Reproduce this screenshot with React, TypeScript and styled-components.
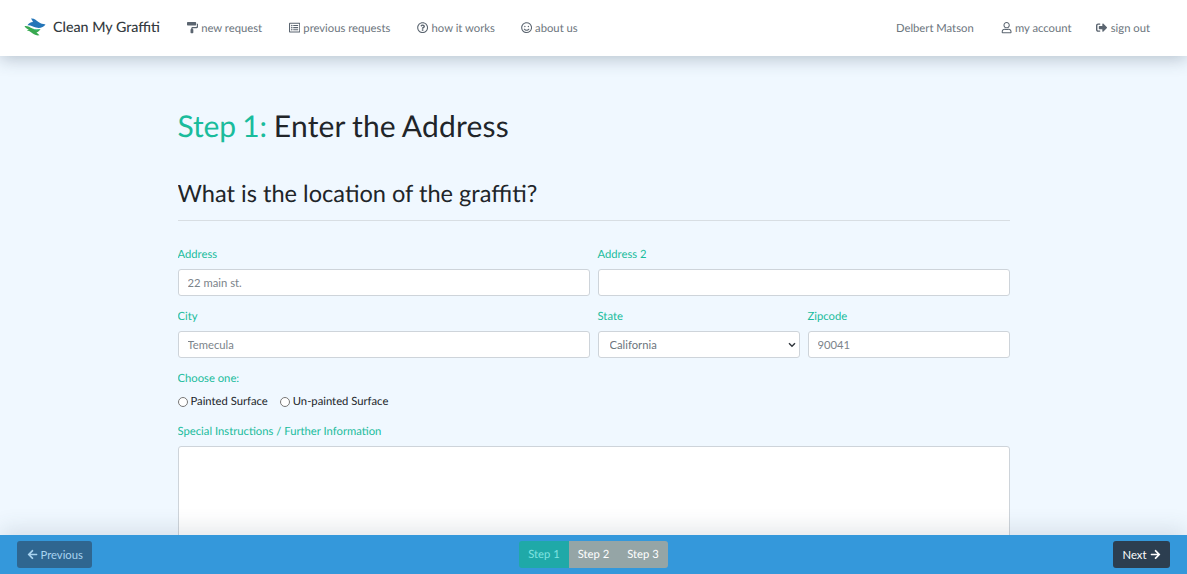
import React from "react";
import styled, { createGlobalStyle } from "styled-components";
import {
  FaArrowLeft,
  FaArrowRight,
  FaPaintRoller,
  FaRegListAlt,
  FaRegQuestionCircle,
  FaRegSmile,
  FaRegUser,
  FaSignOutAlt,
} from "react-icons/fa";

const GlobalStyle = createGlobalStyle`
  * { box-sizing: border-box; }
  html, body, #root { height: 100%; margin: 0; }
  body {
    font-family: Lato, "Liberation Sans", sans-serif;
    background: #f0f8ff;
    color: #212529;
    overflow: hidden;
    text-rendering: geometricPrecision;
  }
`;

const Page = styled.div`
  height: 100%;
  display: flex;
  flex-direction: column;
`;

const Nav = styled.nav`
  flex: 0 0 56px;
  display: flex;
  align-items: center;
  justify-content: space-between;
  padding: 0 37px 0 24px;
  background: #fff;
  box-shadow: 0 3px 16px rgba(50, 70, 90, 0.3);
  position: relative;
  z-index: 2;
`;

const NavGroup = styled.div`
  display: flex;
  align-items: center;
`;

const Brand = styled.a`
  display: flex;
  align-items: center;
  gap: 7px;
  margin-right: 27px;
  padding-bottom: 2px;
  font-size: 14.25px;
  font-weight: 500;
  color: #343a40;
`;

const NavLink = styled.a<{ $gap?: number }>`
  display: flex;
  align-items: center;
  gap: 3px;
  margin-left: ${(p) => p.$gap ?? 0}px;
  font-size: 11.25px;
  color: #6c757d;

  svg {
    font-size: 11.25px;
    color: #5b6570;
  }
`;

const Main = styled.main`
  flex: 1;
  min-height: 0;
  overflow: hidden;
  width: 832px;
  margin: 0 auto;
  padding-top: 49px;
`;

const Title = styled.h1`
  margin: 0 0 32px;
  font-size: 30px;
  line-height: 42px;
  font-weight: 400;
  letter-spacing: 0.2px;
  word-spacing: -1px;
`;

const StepWord = styled.span`
  color: #1abc9c;
  letter-spacing: -0.15px;
`;

const SubTitle = styled.h2`
  margin: 0;
  padding-bottom: 11px;
  border-bottom: 1px solid #d8dee3;
  font-size: 23.6px;
  line-height: 30px;
  font-weight: 400;
`;

const Form = styled.form`
  margin-top: 25px;
`;

const Row = styled.div`
  display: grid;
  grid-template-columns: 1fr 1fr;
  gap: 8px;
  margin-bottom: 12px;
`;

const SplitCell = styled.div`
  display: grid;
  grid-template-columns: 1fr 1fr;
  gap: 8px;
`;

const Field = styled.div`
  display: flex;
  flex-direction: column;
`;

const Label = styled.label`
  padding-top: 1px;
  font-size: 11.25px;
  line-height: 16px;
  margin-bottom: 6px;
  color: #1abc9c;
`;

const Input = styled.input`
  height: 27px;
  padding: 0 9px;
  border: 1px solid #ced4da;
  border-radius: 3px;
  background: #fff;
  font: 11.25px Lato, sans-serif;
  color: #495057;
  outline: none;

  &::placeholder {
    color: #7b838a;
  }
`;

const chevron =
  "url(\"data:image/svg+xml,%3Csvg xmlns='http://www.w3.org/2000/svg' width='8' height='6' viewBox='0 0 8 6'%3E%3Cpath d='M1 1.2l3 3 3-3' fill='none' stroke='%23343a40' stroke-width='1.5'/%3E%3C/svg%3E\")";

const Select = styled.select`
  height: 27px;
  padding: 0 16px 0 11px;
  border: 1px solid #ced4da;
  border-radius: 3px;
  appearance: none;
  background: #fff ${chevron} no-repeat right 3px center;
  font: 11.25px Lato, sans-serif;
  color: #6c757d;
`;

const RadioRow = styled.div`
  display: flex;
  align-items: center;
  gap: 12px;
  margin-top: 1px;
  margin-bottom: 13px;
`;

const RadioLabel = styled.label`
  display: flex;
  align-items: center;
  gap: 3px;
  font-size: 11.25px;
  line-height: 16px;
  color: #212529;
`;

const Radio = styled.input`
  width: 10px;
  height: 10px;
  margin: 0;
`;

const TextArea = styled.textarea`
  display: block;
  width: 100%;
  height: 200px;
  border: 1px solid #ced4da;
  border-radius: 3px;
  background: #fff;
  resize: none;
  outline: none;
`;

const Footer = styled.footer`
  flex: 0 0 39px;
  display: grid;
  grid-template-columns: 1fr auto 1fr;
  align-items: center;
  padding: 0 17px;
  background: #3498db;
  box-shadow: 0 -6px 22px rgba(60, 80, 100, 0.14);
  position: relative;
  z-index: 2;
`;

const FootButton = styled.button<{ $dark?: boolean; $end?: boolean }>`
  justify-self: ${(p) => (p.$end ? "end" : "start")};
  display: flex;
  align-items: center;
  gap: 3px;
  height: 27px;
  padding: 0 9.5px;
  border: 0;
  border-radius: 3px;
  font: 11.25px Lato, sans-serif;
  background: ${(p) => (p.$dark ? "#2c3e50" : "#2f6690")};
  color: ${(p) => (p.$dark ? "#fff" : "#a9d4f0")};
`;

const Steps = styled.div`
  display: flex;
  height: 27px;
  border-radius: 3px;
  overflow: hidden;
`;

const StepItem = styled.span<{ $active?: boolean }>`
  display: flex;
  align-items: center;
  padding: 0 9px;
  font-size: 11.25px;
  background: ${(p) => (p.$active ? "#1fa9a8" : "#95a5a6")};
  color: ${(p) => (p.$active ? "#7fe3e0" : "#fff")};
`;

const Logo = () => (
  <svg width="22" height="18" viewBox="0 0 22 18">
    <path d="M7 0.5 C10.5 0.2 12.5 2.5 14.5 4 C16.5 5.6 19 6 21.5 6.5 C19.5 9.5 15.5 10.5 12 9.5 C9.5 8.8 6.5 6.8 3.5 7.2 C4.5 5.2 6.5 4.2 9 4 C8.5 2.8 7.8 1.5 7 0.5Z" fill="#2475b8" />
    <path d="M0.5 8 C3.5 7.6 6 9.2 8.5 10.5 C10.5 11.5 13 11.8 16.5 11 C15.5 13 14 14 12.5 14.3 C13.2 15.3 14.5 16.5 15.5 17.3 C11.5 18 9 15.8 7 14.3 C5.5 13.2 4.5 12.8 3 12.6 C3.5 12 4 11.6 5 11.3 C3 11 1.3 9.8 0.5 8Z" fill="#38a84f" />
    <path d="M8.5 10.5 C10.5 11.5 13 11.8 16.5 11 C14 13 11 12.8 8.5 10.5Z" fill="#43c6a0" />
  </svg>
);

export default function App() {
  return (
    <Page>
      <GlobalStyle />
      <Nav>
        <NavGroup>
          <Brand>
            <Logo />
            Clean My Graffiti
          </Brand>
          <NavLink>
            <FaPaintRoller />
            new request
          </NavLink>
          <NavLink $gap={27}>
            <FaRegListAlt />
            previous requests
          </NavLink>
          <NavLink $gap={27}>
            <FaRegQuestionCircle />
            how it works
          </NavLink>
          <NavLink $gap={26}>
            <FaRegSmile />
            about us
          </NavLink>
        </NavGroup>
        <NavGroup>
          <NavLink>Delbert Matson</NavLink>
          <NavLink $gap={27}>
            <FaRegUser />
            my account
          </NavLink>
          <NavLink $gap={25}>
            <FaSignOutAlt />
            sign out
          </NavLink>
        </NavGroup>
      </Nav>

      <Main>
        <Title>
          <StepWord>Step 1:</StepWord> Enter the Address
        </Title>
        <SubTitle>What is the location of the graffiti?</SubTitle>
        <Form>
          <Row>
            <Field>
              <Label>Address</Label>
              <Input placeholder="22 main st." />
            </Field>
            <Field>
              <Label>Address 2</Label>
              <Input />
            </Field>
          </Row>
          <Row>
            <Field>
              <Label>City</Label>
              <Input placeholder="Temecula" />
            </Field>
            <SplitCell>
              <Field>
                <Label>State</Label>
                <Select defaultValue="California">
                  <option>California</option>
                </Select>
              </Field>
              <Field>
                <Label>Zipcode</Label>
                <Input placeholder="90041" />
              </Field>
            </SplitCell>
          </Row>
          <Field>
            <Label>Choose one:</Label>
          </Field>
          <RadioRow>
            <RadioLabel>
              <Radio type="radio" name="surface" />
              Painted Surface
            </RadioLabel>
            <RadioLabel>
              <Radio type="radio" name="surface" />
              Un-painted Surface
            </RadioLabel>
          </RadioRow>
          <Field>
            <Label>Special Instructions / Further Information</Label>
          </Field>
          <TextArea />
        </Form>
      </Main>

      <Footer>
        <FootButton>
          <FaArrowLeft size={11} />
          Previous
        </FootButton>
        <Steps>
          <StepItem $active>Step 1</StepItem>
          <StepItem>Step 2</StepItem>
          <StepItem>Step 3</StepItem>
        </Steps>
        <FootButton $dark $end>
          Next
          <FaArrowRight size={11} />
        </FootButton>
      </Footer>
    </Page>
  );
}
